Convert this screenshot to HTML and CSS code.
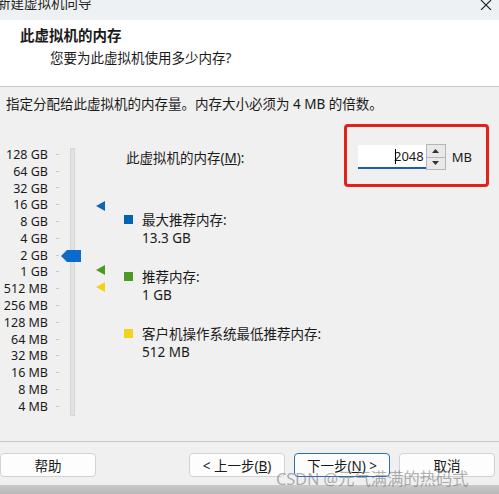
FILE: index.html
```html
<!DOCTYPE html>
<html lang="zh-CN">
<head>
    <meta charset="UTF-8">
    <meta name="viewport" content="width=device-width, initial-scale=1.0">
    <title>新建虚拟机向导</title>
    <link rel="stylesheet" href="styles.css">
</head>
<body>

<div class="window">
    <div class="titlebar">
        <span class="title-text">新建虚拟机向导</span>
        <svg class="close-btn" width="12" height="10" viewBox="0 0 12 10">
            <path d="M1 0 L11 10 M11 0 L1 10" stroke="#222" stroke-width="1.1" fill="none"/>
        </svg>
    </div>

    <div class="header">
        <div class="header-title">此虚拟机的内存</div>
        <div class="header-sub">您要为此虚拟机使用多少内存?</div>
    </div>

    <div class="body">
        <p class="intro">指定分配给此虚拟机的内存量。内存大小必须为 4 MB 的倍数。</p>

        <div class="main">
            <div class="slider">
                <div class="scale">
                    <div class="scale-row"><span class="lbl">128 GB</span><span class="tick"></span></div>
                    <div class="scale-row"><span class="lbl">64 GB</span><span class="tick"></span></div>
                    <div class="scale-row"><span class="lbl">32 GB</span><span class="tick"></span></div>
                    <div class="scale-row"><span class="lbl">16 GB</span><span class="tick"></span></div>
                    <div class="scale-row"><span class="lbl">8 GB</span><span class="tick"></span></div>
                    <div class="scale-row"><span class="lbl">4 GB</span><span class="tick"></span></div>
                    <div class="scale-row"><span class="lbl">2 GB</span><span class="tick"></span></div>
                    <div class="scale-row"><span class="lbl">1 GB</span><span class="tick"></span></div>
                    <div class="scale-row"><span class="lbl">512 MB</span><span class="tick"></span></div>
                    <div class="scale-row"><span class="lbl">256 MB</span><span class="tick"></span></div>
                    <div class="scale-row"><span class="lbl">128 MB</span><span class="tick"></span></div>
                    <div class="scale-row"><span class="lbl">64 MB</span><span class="tick"></span></div>
                    <div class="scale-row"><span class="lbl">32 MB</span><span class="tick"></span></div>
                    <div class="scale-row"><span class="lbl">16 MB</span><span class="tick"></span></div>
                    <div class="scale-row"><span class="lbl">8 MB</span><span class="tick"></span></div>
                    <div class="scale-row"><span class="lbl">4 MB</span><span class="tick"></span></div>
                </div>
                <div class="track"></div>

                <!-- thumb at 2 GB -->
                <svg class="thumb" width="20" height="12" viewBox="0 0 20 12">
                    <polygon points="0,6 6,0 20,0 20,12 6,12" fill="#0a6cc9"/>
                </svg>
                <!-- markers: max / recommended / minimum -->
                <svg class="marker marker-max" width="9" height="10" viewBox="0 0 9 10">
                    <polygon points="0,5 9,0 9,10" fill="#1565b0"/>
                </svg>
                <svg class="marker marker-rec" width="9" height="10" viewBox="0 0 9 10">
                    <polygon points="0,5 9,0 9,10" fill="#4b9a24"/>
                </svg>
                <svg class="marker marker-min" width="9" height="10" viewBox="0 0 9 10">
                    <polygon points="0,5 9,0 9,10" fill="#f1d21a"/>
                </svg>
            </div>

            <div class="settings">
                <div class="mem-row">
                    <span class="mem-label">此虚拟机的内存(<u>M</u>):</span>
                    <div class="mem-input">
                        <div class="num-box"><span class="caret"></span>2048</div>
                        <div class="spinner">
                            <div class="spin-btn">
                                <svg width="7" height="4" viewBox="0 0 7 4"><polygon points="0,4 3.5,0 7,4" fill="#333"/></svg>
                            </div>
                            <div class="spin-btn">
                                <svg width="7" height="4" viewBox="0 0 7 4"><polygon points="0,0 7,0 3.5,4" fill="#333"/></svg>
                            </div>
                        </div>
                        <span class="unit">MB</span>
                    </div>
                </div>

                <div class="legend">
                    <div class="legend-item">
                        <span class="swatch swatch-blue"></span>
                        <div>
                            <div>最大推荐内存:</div>
                            <div>13.3 GB</div>
                        </div>
                    </div>
                    <div class="legend-item">
                        <span class="swatch swatch-green"></span>
                        <div>
                            <div>推荐内存:</div>
                            <div>1 GB</div>
                        </div>
                    </div>
                    <div class="legend-item">
                        <span class="swatch swatch-yellow"></span>
                        <div>
                            <div>客户机操作系统最低推荐内存:</div>
                            <div>512 MB</div>
                        </div>
                    </div>
                </div>
            </div>
        </div>

        <!-- red highlight box drawn over the screenshot -->
        <div class="highlight"></div>
    </div>

    <div class="footer">
        <button class="btn">帮助</button>
        <div class="nav-btns">
            <button class="btn">&lt; 上一步(<u>B</u>)</button>
            <button class="btn btn-focus">下一步(<u>N</u>) &gt;</button>
            <button class="btn">取消</button>
        </div>
    </div>
    <div class="bottom-strip"></div>

    <div class="watermark">CSDN @元气满满的热码式</div>
</div>

</body>
</html>
```

FILE: styles.css
```css
body {
    margin: 0;
    font-family: "Noto Sans", "Noto Sans CJK SC", sans-serif;
    font-size: 13.5px;
    color: #1a1a1a;
    background: #f0f0f0;
}
.window {
    position: relative;
    width: 499px;
    height: 494px;
    overflow: hidden;
    background: #f0f0f0;
}
.titlebar {
    position: relative;
    height: 20px;
    background: #eef1f3;
    overflow: hidden;
}
.title-text {
    display: block;
    margin: -4px 0 0 -3px;
    line-height: 14px;
    font-size: 13.5px;
    color: #222;
}
.close-btn {
    position: absolute;
    top: 0;
    right: 7px;
}
.header {
    height: 66px;
    background: #fff;
    border-bottom: 1px solid #c9c9c9;
}
.header-title {
    padding: 6px 0 0 20px;
    font-size: 14.5px;
    font-weight: bold;
    line-height: 18px;
}
.header-sub {
    padding: 5px 0 0 50px;
    line-height: 18px;
}
.body {
    position: relative;
    height: 354px;
    border-bottom: 1px solid #c9c9c9;
}
.intro {
    margin: 0;
    padding: 8px 0 0 6px;
    line-height: 18px;
}
.main {
    display: flex;
    margin-top: 33px;
}
.slider {
    position: relative;
    display: flex;
    width: 123px;
    height: 270px;
}
.scale {
    width: 60px;
}
.scale-row {
    display: flex;
    align-items: center;
    height: 16.8px;
}
.lbl {
    width: 48px;
    text-align: right;
    font-size: 12.5px;
    white-space: nowrap;
}
.tick {
    width: 3px;
    height: 1px;
    margin-left: 8px;
    background: #c8c8c8;
}
.track {
    width: 3px;
    height: 266px;
    margin: 2px 0 0 10px;
    background: #e2e2e2;
    border: 1px solid #d6d6d6;
}
.thumb {
    position: absolute;
    left: 61px;
    top: 104px;
}
.marker {
    position: absolute;
    left: 96px;
}
.marker-max { top: 55px; }
.marker-rec { top: 119px; }
.marker-min { top: 136px; }

.settings {
    flex: 1;
}
.mem-row {
    display: flex;
    align-items: center;
    justify-content: space-between;
    height: 24px;
    margin-top: -1px;
}
.mem-label {
    margin-left: 3px;
}
.mem-input {
    display: flex;
    align-items: center;
    margin-right: 27px;
}
.num-box {
    position: relative;
    width: 66px;
    height: 22px;
    padding-right: 2px;
    line-height: 22px;
    font-size: 13px;
    text-align: right;
    background: #fff;
    border-bottom: 2px solid #1b5fa8;
}
.caret {
    position: absolute;
    left: 37px;
    top: 4px;
    width: 1px;
    height: 15px;
    background: #000;
}
.spinner {
    display: flex;
    flex-direction: column;
    width: 18px;
    height: 24px;
    border: 1px solid #b5b5b5;
    background: #e9e9e9;
}
.spin-btn {
    flex: 1;
    display: flex;
    align-items: center;
    justify-content: center;
}
.spin-btn + .spin-btn {
    border-top: 1px solid #b5b5b5;
}
.unit {
    margin-left: 6px;
    font-size: 13px;
}
.legend {
    margin-top: 42px;
}
.legend-item {
    display: flex;
    line-height: 18px;
    margin-bottom: 21px;
}
.swatch {
    width: 9px;
    height: 9px;
    margin: 4px 9px 0 1px;
}
.swatch-blue { background: #0063b1; }
.swatch-green { background: #4b9a24; }
.swatch-yellow { background: #f3d21a; }

.highlight {
    position: absolute;
    left: 344px;
    top: 37px;
    width: 139px;
    height: 57px;
    border: 3px solid #e3211c;
    border-radius: 4px;
}
.footer {
    display: flex;
    justify-content: space-between;
    align-items: center;
    height: 43px;
}
.nav-btns {
    display: flex;
    gap: 9px;
    margin-right: 4px;
}
.btn {
    width: 96px;
    height: 24px;
    margin-top: 2px;
    padding: 0;
    font-family: inherit;
    font-size: 13.5px;
    color: #1a1a1a;
    background: #fdfdfd;
    border: 1px solid #d2d2d2;
    border-radius: 4px;
}
.btn-focus {
    border-color: #2a6db4;
}
.bottom-strip {
    height: 9px;
    background: linear-gradient(#c9c9c9, #b9b9b9);
}
.watermark {
    position: absolute;
    left: 276px;
    top: 466px;
    font-size: 16.5px;
    letter-spacing: -0.2px;
    color: rgba(110, 110, 110, 0.55);
    white-space: nowrap;
}
```
